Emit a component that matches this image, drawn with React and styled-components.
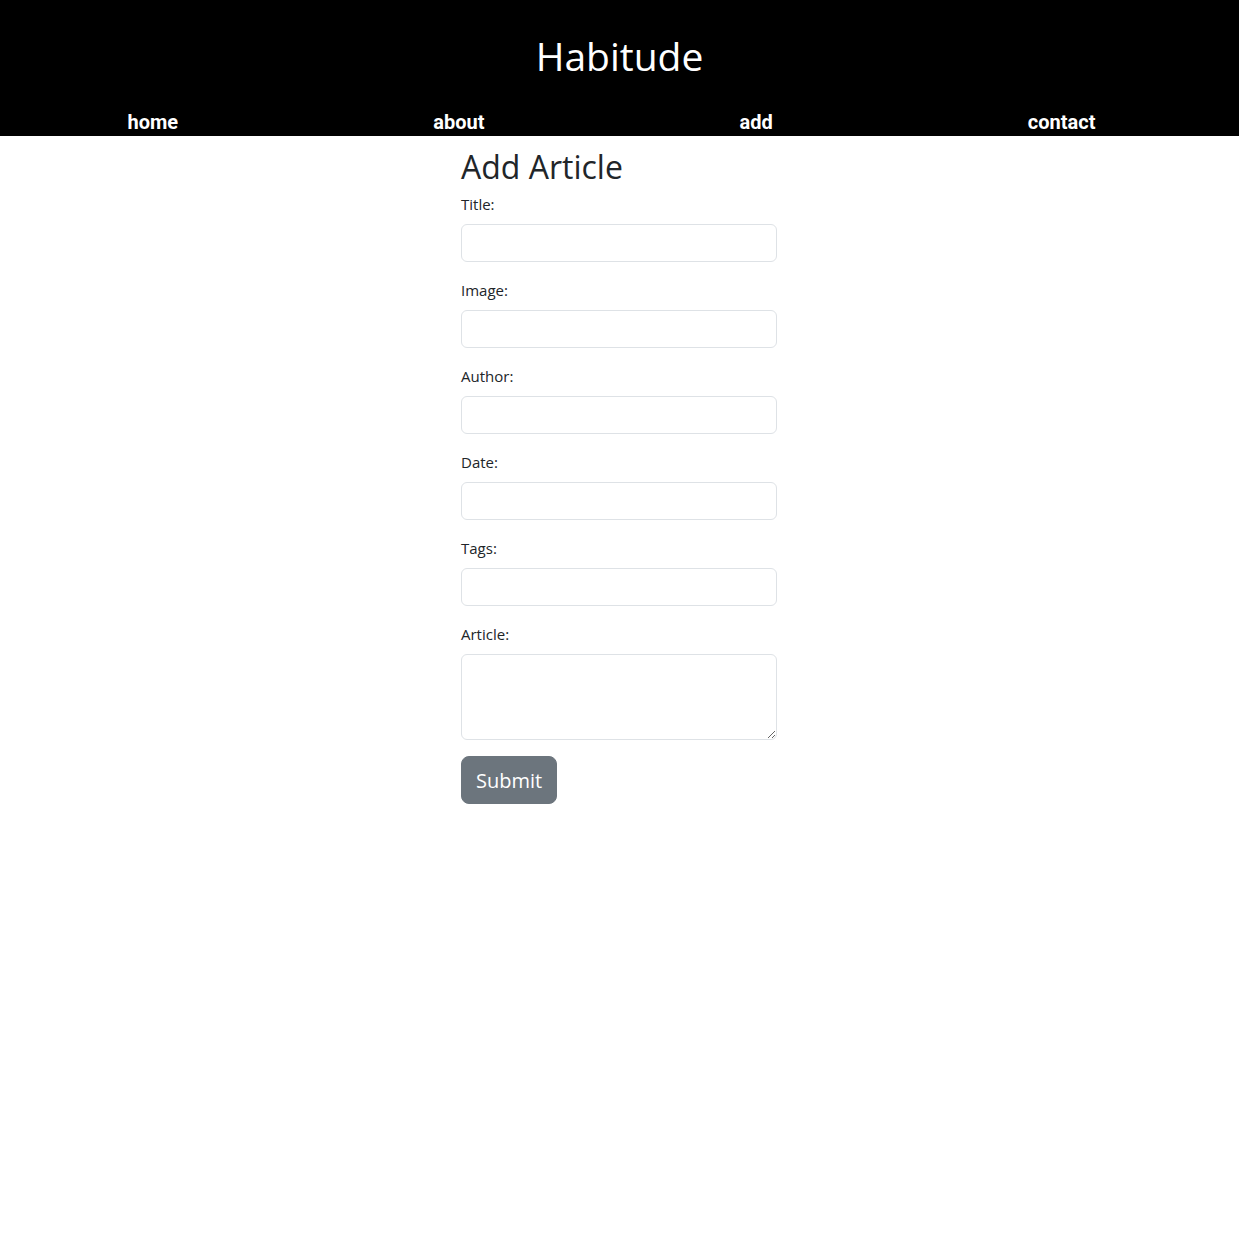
import styled, { createGlobalStyle } from 'styled-components';

const GlobalStyle = createGlobalStyle`
  * { box-sizing: border-box; }
  body {
    margin: 0;
    font-family: "Open Sans", "Noto Sans", sans-serif;
    color: #212529;
    background: #fff;
  }
`;

const Header = styled.header`
  background: #000;
  color: #fff;
  height: 136px;
  padding-top: 32px;
  overflow: hidden;
`;

const Brand = styled.h1`
  margin: 0;
  text-align: center;
  font-size: 39px;
  font-weight: 500;
  line-height: 48px;
`;

const Nav = styled.nav`
  display: flex;
  justify-content: space-around;
  margin-top: 28px;
  padding-right: 16px;
`;

const NavLink = styled.a`
  color: #fff;
  text-decoration: none;
  font-family: Roboto, sans-serif;
  font-weight: 700;
  font-size: 20px;
  line-height: 28px;
`;

const Main = styled.main`
  width: 316px;
  margin-left: calc(50% - 158.5px);
  padding-top: 12px;
`;

const Heading = styled.h2`
  margin: 0 0 6px;
  font-size: 32px;
  font-weight: 500;
  line-height: 1.2;
`;

const Field = styled.div`
  margin-bottom: 16px;
`;

const Label = styled.label`
  display: block;
  font-size: 15px;
  line-height: 24px;
  margin-bottom: 8px;
`;

const Input = styled.input`
  display: block;
  width: 100%;
  height: 38px;
  padding: 6px 12px;
  font-size: 16px;
  border: 1px solid #dee2e6;
  border-radius: 6px;
  outline: none;
`;

const TextArea = styled.textarea`
  display: block;
  width: 100%;
  height: 86px;
  padding: 6px 12px;
  font-size: 16px;
  font-family: inherit;
  border: 1px solid #dee2e6;
  border-radius: 6px;
  outline: none;
  resize: vertical;
`;

const Button = styled.button`
  height: 48px;
  padding: 0 14px;
  font-family: inherit;
  font-size: 20px;
  color: #fff;
  background: #6c757d;
  border: 1px solid #6c757d;
  border-radius: 8px;
  cursor: pointer;
`;

const fields = ['Title', 'Image', 'Author', 'Date', 'Tags'];

export default function App() {
  return (
    <>
      <GlobalStyle />
      <Header>
        <Brand>Habitude</Brand>
        <Nav>
          <NavLink href="#">home</NavLink>
          <NavLink href="#">about</NavLink>
          <NavLink href="#">add</NavLink>
          <NavLink href="#">contact</NavLink>
        </Nav>
      </Header>
      <Main>
        <Heading>Add Article</Heading>
        <form onSubmit={(e) => e.preventDefault()}>
          {fields.map((f) => (
            <Field key={f}>
              <Label htmlFor={f}>{f}:</Label>
              <Input id={f} type="text" />
            </Field>
          ))}
          <Field>
            <Label htmlFor="article">Article:</Label>
            <TextArea id="article" />
          </Field>
          <Button type="submit">Submit</Button>
        </form>
      </Main>
    </>
  );
}
